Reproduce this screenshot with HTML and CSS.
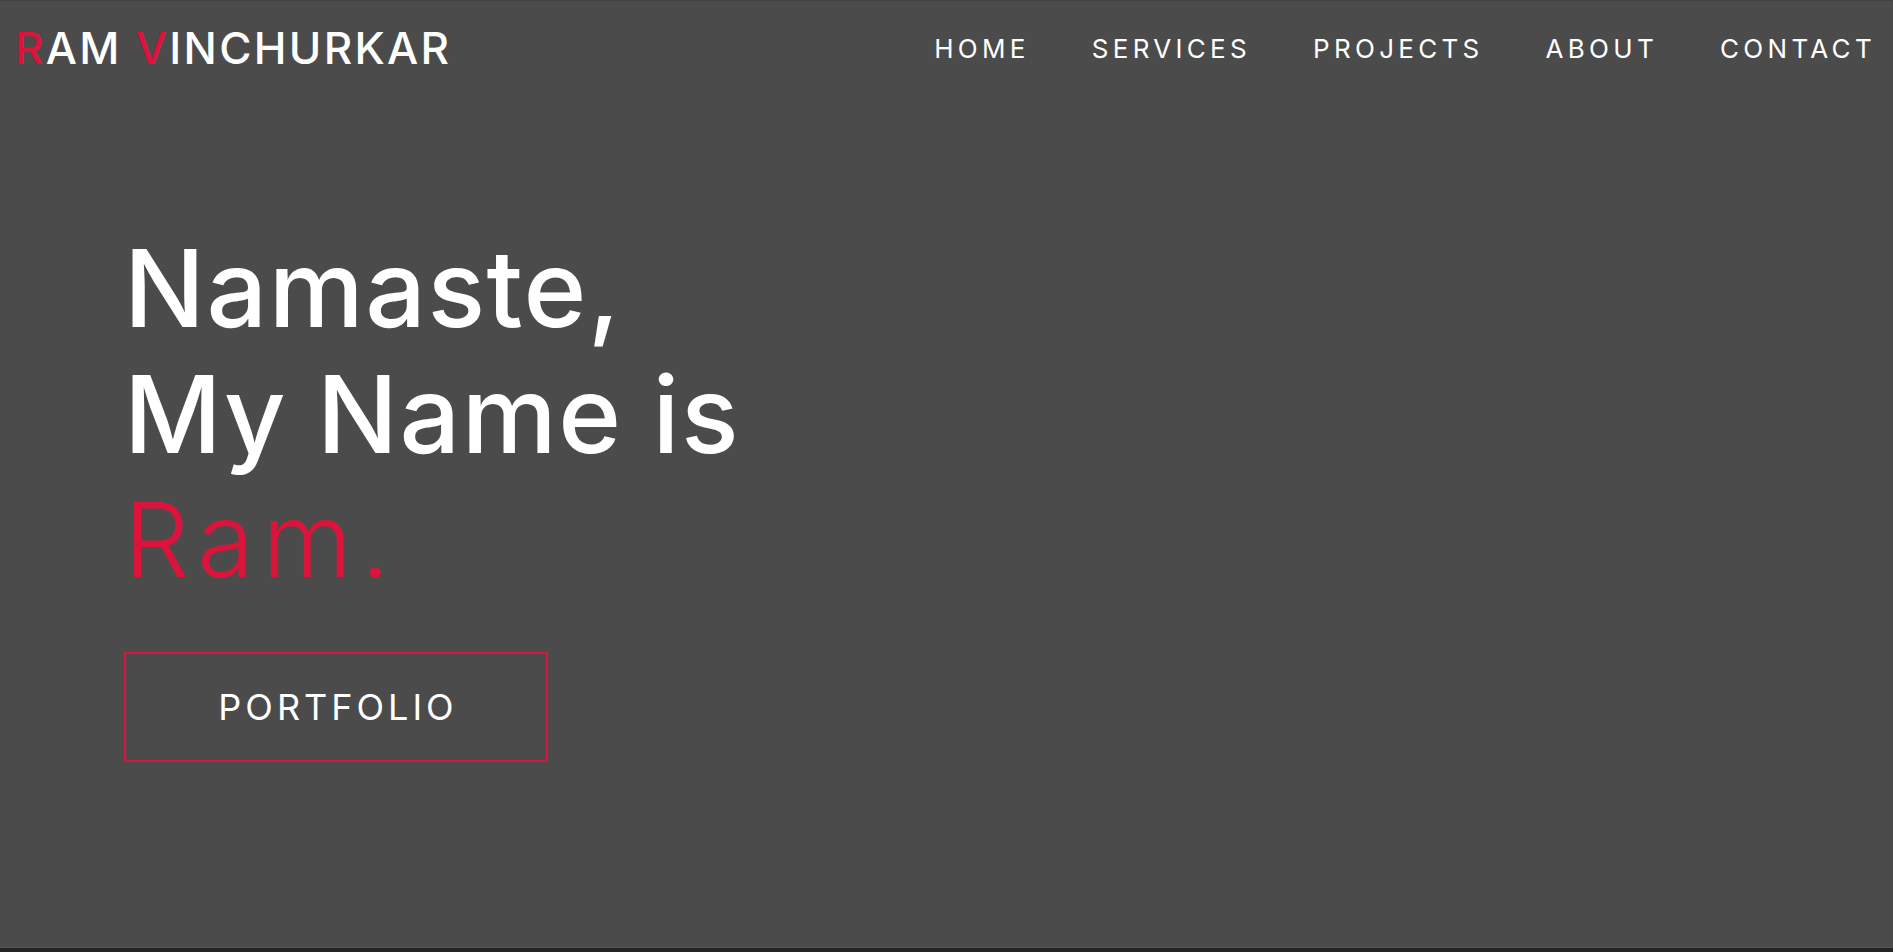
FILE: index.html
```html
<!DOCTYPE html>
<html lang="en">
<head>
<meta charset="utf-8">
<title>Ram Vinchurkar</title>
<link rel="stylesheet" href="styles.css">
</head>
<body>
<section class="hero">
  <header class="topbar">
    <a class="logo" href="#"><span class="accent">R</span>AM <span class="accent">V</span>INCHURKAR</a>
    <nav class="nav">
      <a href="#">HOME</a>
      <a href="#">SERVICES</a>
      <a href="#">PROJECTS</a>
      <a href="#">ABOUT</a>
      <a href="#">CONTACT</a>
    </nav>
  </header>
  <div class="intro">
    <h1 class="headline">
      <span class="line">Namaste,</span>
      <span class="line">My Name is</span>
      <span class="line name">Ram.</span>
    </h1>
    <a class="btn" href="#">PORTFOLIO</a>
  </div>
</section>
<section class="next"></section>
</body>
</html>
```
FILE: styles.css
```css
* { box-sizing: border-box; }
html, body { margin: 0; padding: 0; }
body {
  background: #232323;
  font-family: Inter, "Noto Sans", sans-serif;
  color: #fff;
  overflow: hidden;
}
a { color: inherit; text-decoration: none; }

.hero {
  height: 948px;
  background: #4b4b4b;
  border-top: 1px solid #414141;
  border-bottom: 1px solid #555;
  display: flex;
  flex-direction: column;
}

.topbar {
  height: 94px;
  display: flex;
  align-items: center;
  justify-content: space-between;
  padding: 0 17px 0 15px;
}
.logo {
  font-size: 44px;
  font-weight: 500;
  letter-spacing: 2.3px;
  color: #fff;
}
.accent { color: #dc143c; }

.nav {
  display: flex;
  gap: 62px;
}
.nav a {
  font-size: 26px;
  font-weight: 400;
  letter-spacing: 4.3px;
}

.intro {
  padding: 130px 0 0 124px;
  display: flex;
  flex-direction: column;
  align-items: flex-start;
}
.headline {
  margin: 0;
  font-size: 107px;
  font-weight: 500;
  line-height: 126px;
  letter-spacing: 1.5px;
}
.line { display: block; }
.name {
  color: #dc143c;
  font-weight: 300;
  font-size: 103px;
  letter-spacing: 8.5px;
}

.btn {
  margin-top: 49px;
  width: 424px;
  height: 110px;
  border: 2px solid #dc143c;
  display: flex;
  align-items: center;
  justify-content: center;
  padding-left: 4px;
  font-size: 36px;
  font-weight: 400;
  letter-spacing: 4px;
}

.next {
  height: 20px;
  background: #232323;
}
```
